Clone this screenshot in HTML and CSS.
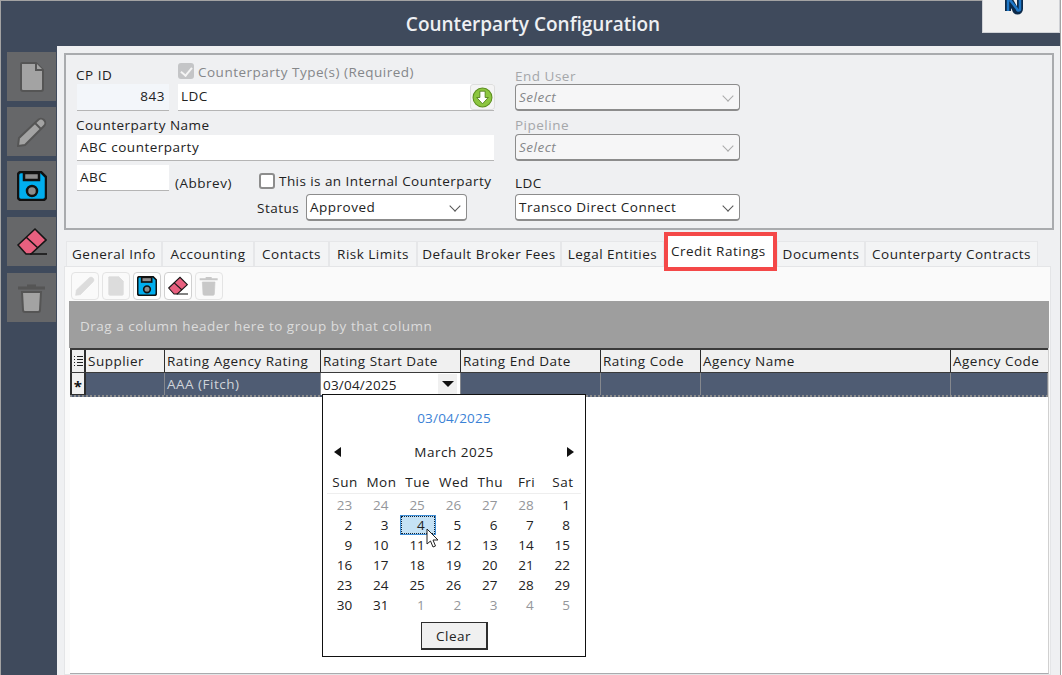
FILE: index.html
```html
<!DOCTYPE html>
<html lang="en">

<head>
    <meta charset="UTF-8">
    <title>Counterparty Configuration</title>
    <link rel="stylesheet" href="styles.css">
</head>

<body>
    <!-- shared icons -->
    <svg class="defs" width="0" height="0">
        <symbol id="i-page" viewBox="0 0 30 30">
            <path d="M5 1h14l7 7v19a2 2 0 0 1-2 2H6a2 2 0 0 1-2-2V2a1 1 0 0 1 1-1z" />
            <path d="M19 1v7h7" />
        </symbol>
        <symbol id="i-pencil" viewBox="0 0 30 30">
            <path d="M1 29l1-8L21 3a4 4 0 0 1 6 6L8 28z" />
            <path d="M18 6l6 6" />
        </symbol>
        <symbol id="i-save" viewBox="0 0 30 30">
            <path d="M1 4a3 3 0 0 1 3-3h20l5 5v20a3 3 0 0 1-3 3H4a3 3 0 0 1-3-3z" />
            <rect class="part" x="7" y="2" width="15" height="7" />
            <circle class="part" cx="15" cy="20" r="5" />
        </symbol>
        <symbol id="i-eraser" viewBox="0 0 30 30">
            <path d="M1 18L18 2l11 11-15 14H9z" />
            <path d="M9 10l12 11" />
            <path d="M13 27h17" />
        </symbol>
        <symbol id="i-trash" viewBox="0 0 30 30">
            <path class="lid" d="M1 5h27M10 3h9" />
            <path d="M5 9h19l-1 18a2 2 0 0 1-2 2H8a2 2 0 0 1-2-2z" />
        </symbol>
    </svg>

    <div class="window">
        <header class="title-bar">
            <h1>Counterparty Configuration</h1>
            <div class="logo">
                <svg width="20" height="15" viewBox="0 0 20 15">
                    <path d="M4 -4v15M16 -4v13a2.500 2.500 0 0 1-5 0L6 0" fill="none" stroke="#0c2a4a" stroke-width="6" />
                    <path d="M4 -4v15M16 -4v13a1 1 0 0 1-3 0L6 0" fill="none" stroke="#1f78c8" stroke-width="2.500" />
                </svg>
            </div>
        </header>

        <div class="content">
            <nav class="sidebar">
                <button class="side-btn off"><svg><use href="#i-page" /></svg></button>
                <button class="side-btn off"><svg><use href="#i-pencil" /></svg></button>
                <button class="side-btn save"><svg><use href="#i-save" /></svg></button>
                <button class="side-btn eraser"><svg><use href="#i-eraser" /></svg></button>
                <button class="side-btn off"><svg><use href="#i-trash" /></svg></button>
            </nav>

            <main class="main">
                <section class="form-box">
                    <div class="form-left">
                        <div class="row-top">
                            <div class="col-id">
                                <div class="lbl">CP ID</div>
                                <div class="field id-field">843</div>
                            </div>
                            <div class="col-type">
                                <div class="type-lbl"><span class="check-on"></span>Counterparty Type(s) (Required)</div>
                                <div class="field type-field">LDC
                                    <span class="add-btn">
                                        <svg width="21" height="21" viewBox="0 0 20 20">
                                            <circle cx="10" cy="10" r="9" fill="#8cc63f" stroke="#5d8f1f" />
                                            <path d="M7.500 4h5v6h3L10 16l-5.500-6h3z" fill="#fff" stroke="#4d7a18" stroke-width=".8" />
                                        </svg>
                                    </span>
                                </div>
                            </div>
                        </div>
                        <div class="lbl name-lbl">Counterparty Name</div>
                        <div class="field name-field">ABC counterparty</div>
                        <div class="row-abbrev">
                            <div class="field abbrev-field">ABC</div>
                            <div class="abbrev-lbl">(Abbrev)</div>
                            <div class="internal">
                                <div class="internal-check"><span class="check-off"></span>This is an Internal Counterparty</div>
                                <div class="status-row">
                                    <span class="status-lbl">Status</span>
                                    <div class="select status-select">Approved</div>
                                </div>
                            </div>
                        </div>
                    </div>

                    <div class="form-right">
                        <div class="lbl dim end-lbl">End User</div>
                        <div class="select disabled">Select</div>
                        <div class="lbl dim pipeline-lbl">Pipeline</div>
                        <div class="select disabled">Select</div>
                        <div class="lbl ldc-lbl">LDC</div>
                        <div class="select">Transco Direct Connect</div>
                    </div>
                </section>

                <div class="tabs">
                    <div class="tab">General Info</div>
                    <div class="tab">Accounting</div>
                    <div class="tab">Contacts</div>
                    <div class="tab">Risk Limits</div>
                    <div class="tab">Default Broker Fees</div>
                    <div class="tab">Legal Entities</div>
                    <div class="tab active">Credit Ratings</div>
                    <div class="tab">Documents</div>
                    <div class="tab">Counterparty Contracts</div>
                </div>

                <section class="tab-panel">
                    <div class="toolbar">
                        <button class="tool-btn dis"><svg><use href="#i-pencil" /></svg></button>
                        <button class="tool-btn dis"><svg><use href="#i-page" /></svg></button>
                        <button class="tool-btn save"><svg><use href="#i-save" /></svg></button>
                        <button class="tool-btn eraser"><svg><use href="#i-eraser" /></svg></button>
                        <button class="tool-btn dis trash"><svg><use href="#i-trash" /></svg></button>
                    </div>

                    <div class="group-panel">Drag a column header here to group by that column</div>

                    <div class="grid-wrap">
                        <div class="grid-row head">
                            <div class="cell ind">
                                <svg width="9" height="13" viewBox="0 0 9 13">
                                    <path d="M0 1.500h1M0 4.500h1M0 7.500h1M0 10.500h1M3 1.500h6M3 4.500h6M3 7.500h6M3 10.500h6" stroke="#222" fill="none" />
                                </svg>
                            </div>
                            <div class="cell">Supplier</div>
                            <div class="cell">Rating Agency Rating</div>
                            <div class="cell">Rating Start Date</div>
                            <div class="cell">Rating End Date</div>
                            <div class="cell">Rating Code</div>
                            <div class="cell">Agency Name</div>
                            <div class="cell">Agency Code</div>
                        </div>
                        <div class="grid-row new-row">
                            <div class="cell ind star">*</div>
                            <div class="cell"></div>
                            <div class="cell">AAA (Fitch)</div>
                            <div class="cell editor">03/04/2025<span class="drop-btn"></span></div>
                            <div class="cell"></div>
                            <div class="cell"></div>
                            <div class="cell"></div>
                            <div class="cell"></div>
                        </div>

                        <div class="calendar">
                            <div class="cal-today">03/04/2025</div>
                            <div class="cal-nav">
                                <span class="arrow left"></span>
                                <span>March 2025</span>
                                <span class="arrow right"></span>
                            </div>
                            <div class="cal-grid dows">
                                <span>Sun</span><span>Mon</span><span>Tue</span><span>Wed</span><span>Thu</span><span>Fri</span><span>Sat</span>
                            </div>
                            <div class="cal-grid days">
                                <span class="out">23</span><span class="out">24</span><span class="out">25</span><span class="out">26</span><span class="out">27</span><span class="out">28</span><span>1</span>
                                <span>2</span><span>3</span><span class="sel">4</span><span>5</span><span>6</span><span>7</span><span>8</span>
                                <span>9</span><span>10</span><span>11</span><span>12</span><span>13</span><span>14</span><span>15</span>
                                <span>16</span><span>17</span><span>18</span><span>19</span><span>20</span><span>21</span><span>22</span>
                                <span>23</span><span>24</span><span>25</span><span>26</span><span>27</span><span>28</span><span>29</span>
                                <span>30</span><span>31</span><span class="out">1</span><span class="out">2</span><span class="out">3</span><span class="out">4</span><span class="out">5</span>
                            </div>
                            <button class="clear-btn">Clear</button>
                            <svg class="cursor" width="14" height="21" viewBox="0 0 14 21">
                                <path d="M1 1v15l3.500-3 2.500 6 2.500-1-2.500-6h5z" fill="#fff" stroke="#222" />
                            </svg>
                        </div>
                    </div>
                </section>
            </main>
        </div>
    </div>
</body>

</html>
```

FILE: styles.css
```css
* {
    box-sizing: border-box;
}

html,
body {
    margin: 0;
    height: 675px;
    overflow: hidden;
    background: #fff;
}

body {
    font-family: 'Open Sans', 'Noto Sans', sans-serif;
    font-size: 13.500px;
    letter-spacing: 0.500px;
    color: #222;
}

.defs {
    position: absolute;
}

.window {
    display: flex;
    flex-direction: column;
    width: 1061px;
    height: 675px;
    background: #3f4a5c;
    border: 1px solid #a3a3a3;
    border-bottom: 0;
}

/* title */
.title-bar {
    position: relative;
    height: 45px;
    flex: none;
    display: flex;
    align-items: center;
    justify-content: center;
}

.title-bar h1 {
    margin: 0 0 0 5px;
    font-size: 19px;
    font-weight: 600;
    letter-spacing: 0;
    color: #eef0f3;
}

.logo {
    position: absolute;
    top: -1px;
    right: 0;
    width: 78px;
    height: 33px;
    display: flex;
    justify-content: center;
    background: #f1f1f1;
    border: 1px solid #d0d2d6;
    border-top: 0;
    padding-right: 14px;
}

.content {
    flex: 1;
    display: flex;
    min-height: 0;
}

/* left buttons */
.sidebar {
    width: 56px;
    flex: none;
    padding: 6px 0 0 6px;
    display: flex;
    flex-direction: column;
}

.side-btn {
    width: 49px;
    height: 49px;
    margin-bottom: 7px;
    padding: 0;
    border: 0;
    background: #666769;
    display: flex;
    align-items: center;
    justify-content: center;
}

.side-btn svg {
    width: 30px;
    height: 30px;
    fill: #a3a3a3;
    stroke: #555;
    stroke-width: 2;
}

.side-btn:nth-child(1) {
    margin-bottom: 6px;
}

.side-btn:nth-child(2) {
    margin-bottom: 5px;
}

.side-btn.save svg,
.tool-btn.save svg {
    fill: #00aeef;
    stroke: #111;
    stroke-width: 2.500;
}

.part {
    fill: #8c8c8c;
}

.side-btn.eraser svg,
.tool-btn.eraser svg {
    fill: #e8607f;
    stroke: #161616;
    stroke-width: 1.600;
}

.lid {
    stroke-width: 3;
}

.main {
    flex: 1;
    min-width: 0;
    background: #eff0f2;
    padding: 7px 6px 0 7px;
    display: flex;
    flex-direction: column;
}

/* top form */
.form-box {
    height: 177px;
    flex: none;
    border: 2px solid #a9abae;
    padding: 11px 0 0 11px;
    display: flex;
    gap: 21px;
}

.form-left {
    width: 417px;
}

.form-right {
    width: 225px;
}

.lbl {
    height: 18px;
    line-height: 18px;
}

.form-left .lbl {
    margin-left: -1px;
}

.end-lbl {
    line-height: 20px;
}

.dim {
    color: #a5a7aa;
}

.field {
    height: 26px;
    line-height: 25px;
    padding: 0 3px;
    background: #fff;
    border-bottom: 1px solid #b5b5b5;
}

.row-top {
    display: flex;
    gap: 9px;
}

.col-id {
    width: 92px;
}

.id-field {
    height: 27px;
    background: #f3f6fa;
    text-align: right;
    padding-right: 4px;
}

.col-type {
    flex: 1;
    margin-top: -4px;
}

.type-lbl {
    height: 22px;
    line-height: 20px;
    color: #85878a;
    display: flex;
    white-space: nowrap;
}

.check-on {
    width: 16px;
    height: 16px;
    margin: 1px 4px 0 0;
    border-radius: 3px;
    background: #c4c5c7;
    position: relative;
}

.check-on::after {
    content: "";
    position: absolute;
    left: 5px;
    top: 2px;
    width: 5px;
    height: 9px;
    border: solid #f4f4f4;
    border-width: 0 2px 2px 0;
    transform: rotate(40deg);
}

.type-field {
    height: 27px;
    position: relative;
}

.add-btn {
    position: absolute;
    right: -1px;
    top: 0;
    width: 25px;
    height: 26px;
    display: flex;
    align-items: center;
    justify-content: center;
    background: #f4f4f4;
    border: 1px solid #dedede;
    border-radius: 3px;
}

.name-lbl {
    margin-top: 5px;
}

.name-field {
    margin-top: 1px;
}

.row-abbrev {
    display: flex;
    margin-top: 4px;
}

.abbrev-field {
    width: 92px;
}

.abbrev-lbl {
    width: 88px;
    padding: 9px 0 0 6px;
    line-height: 18px;
}

.internal {
    flex: 1;
}

.internal-check {
    height: 18px;
    margin-top: 7px;
    line-height: 18px;
    display: flex;
    white-space: nowrap;
    letter-spacing: 0.440px;
}

.check-off {
    width: 16px;
    height: 16px;
    margin: 1px 4px 0 2px;
    background: #fff;
    border: 2px solid #8d8d8d;
    border-radius: 3px;
}

.status-row {
    display: flex;
    align-items: center;
    margin-top: 4px;
}

.status-lbl {
    width: 49px;
}

.select {
    position: relative;
    height: 27px;
    line-height: 25px;
    padding: 0 3px;
    background: #fff;
    border: 1px solid #8c8c8c;
    border-bottom-width: 2px;
    border-radius: 4px;
}

.select::after {
    content: "";
    position: absolute;
    right: 7px;
    top: 7px;
    width: 7px;
    height: 7px;
    border: solid #555;
    border-width: 0 1px 1px 0;
    transform: rotate(45deg);
}

.select.disabled {
    background: #f6f6f7;
    color: #85878a;
    font-style: italic;
}

.select.disabled::after {
    border-color: #aaa;
}

.status-select {
    width: 161px;
}

.pipeline-lbl {
    margin-top: 5px;
}

.ldc-lbl {
    margin: 13px 0 2px;
}

/* tabs */
.tabs {
    display: grid;
    grid-template-columns: 96px 92px 75px 88px 144px 103px 113px 88px 173px;
    grid-template-rows: 25px;
    margin-top: 11px;
    padding-left: 2px;
    flex: none;
}

.tab {
    display: flex;
    align-items: center;
    justify-content: center;
    white-space: nowrap;
    background: #f3f4f5;
    border: 1px solid #e6e7e9;
    border-bottom: 0;
}

.tab.active {
    position: relative;
    z-index: 1;
    margin: -9px 0 -5px;
    background: #fff;
    border: 4px solid #f44848;
    padding: 0 0 2px 3px;
    justify-content: flex-start;
}

.tab-panel {
    flex: 1;
    min-height: 0;
    width: 987px;
    background: #fafafa;
    border: 1px solid #e4e5e7;
    padding-left: 4px;
    display: flex;
    flex-direction: column;
}

.toolbar {
    height: 34px;
    flex: none;
    display: flex;
    gap: 3px;
    padding: 5px 0 0 2px;
}

.tool-btn {
    width: 28px;
    height: 28px;
    padding: 0;
    background: #fafafa;
    border: 1px solid #e4e4e4;
    border-radius: 4px;
    display: flex;
    align-items: center;
    justify-content: center;
}

.tool-btn svg {
    width: 20px;
    height: 20px;
}

.tool-btn.dis svg {
    fill: #dcdcdc;
    stroke: #dcdcdc;
}

.tool-btn.trash svg {
    fill: #c8c8c8;
    stroke: #c8c8c8;
}

.tool-btn.save,
.tool-btn.eraser {
    background: #fff;
    border: 1px solid #d0d0d0;
}

/* grid */
.group-panel {
    height: 47px;
    flex: none;
    width: 980px;
    padding: 16px 0 0 11px;
    line-height: 18px;
    background: #9e9e9e;
    color: #dcdcdc;
}

.grid-wrap {
    position: relative;
    flex: 1;
    width: 979px;
    margin-left: 1px;
    background: #fff;
    border-right: 1px solid #d0d0d0;
    border-bottom: 1px solid #a9abae;
}

.grid-row {
    display: grid;
    grid-template-columns: 16px 79px 156px 140px 140px 100px 250px 97px;
}

.grid-row.head {
    height: 25px;
    background: #f0f0f0;
    border-top: 2px solid #3a3a3a;
    border-bottom: 1px solid #3a3a3a;
}

.cell {
    padding: 0 2px;
    line-height: 22px;
    white-space: nowrap;
    overflow: hidden;
    border-right: 1px solid #2e2e2e;
}

.cell:last-child {
    border-right: 0;
}

.ind {
    padding: 0;
    display: flex;
    justify-content: center;
    align-items: center;
    border-left: 2px solid #2e2e2e;
    border-right: 2px solid #2e2e2e;
}

.grid-row.new-row {
    height: 24px;
    background: #4f5c73;
    color: #d0d4da;
    border-bottom: 2px dotted #8d8d8d;
}

.new-row .cell {
    border-right: 1px solid #85888e;
}

.new-row .ind {
    background: #f0f0f0;
    color: #111;
    border-right: 2px solid #2e2e2e;
    border-bottom: 1px solid #2e2e2e;
    font-weight: 700;
    font-size: 15px;
    line-height: 26px;
    align-items: flex-start;
}

.editor {
    position: relative;
    background: #fff;
    color: #222;
    padding-top: 1px;
    letter-spacing: 0.200px;
}

.drop-btn {
    position: absolute;
    right: 3px;
    top: 1px;
    width: 19px;
    height: 20px;
    background: #f0f0f0;
}

.drop-btn::after {
    content: "";
    position: absolute;
    left: 4px;
    top: 7px;
    border: 6px solid transparent;
    border-top: 6px solid #111;
    border-bottom: 0;
}

/* date popup */
.calendar {
    position: absolute;
    left: 252px;
    top: 46px;
    width: 264px;
    height: 263px;
    background: #fff;
    border: 1px solid #111;
    display: flex;
    flex-direction: column;
    align-items: center;
}

.cal-today {
    margin-top: 14px;
    height: 18px;
    line-height: 18px;
    color: #3b82d6;
    letter-spacing: 0.200px;
}

.cal-nav {
    width: 100%;
    margin-top: 16px;
    height: 18px;
    line-height: 18px;
    padding: 0 11px;
    display: flex;
    align-items: center;
    justify-content: space-between;
}

.arrow {
    border: 5px solid transparent;
}

.arrow.left {
    border-left: 0;
    border-right: 7px solid #111;
}

.arrow.right {
    border-right: 0;
    border-left: 7px solid #111;
}

.cal-grid {
    display: grid;
    grid-template-columns: repeat(7, 36.300px);
}

.dows {
    margin-top: 12px;
    padding-bottom: 2px;
    height: 21px;
    line-height: 18px;
    border-bottom: 1px solid #eee;
    text-align: center;
}

.days {
    margin-top: 1px;
    grid-auto-rows: 20px;
    line-height: 20px;
    text-align: right;
    letter-spacing: 0;
}

.days span {
    padding-right: 11px;
}

.days .out {
    color: #94969a;
}

.days .sel {
    background: #c5e2f5;
    outline: 1px dotted #123;
    outline-offset: -2px;
    border: 1px solid #3f8fd8;
    line-height: 18px;
    padding-right: 10px;
}

.clear-btn {
    margin-top: 7px;
    width: 67px;
    height: 28px;
    padding: 0;
    font: inherit;
    letter-spacing: inherit;
    color: inherit;
    background: #f0f0f0;
    border: 2px solid #2e2e2e;
    border-width: 1px 2px 2px 1px;
}

.cursor {
    position: absolute;
    left: 103px;
    top: 133px;
}
```
